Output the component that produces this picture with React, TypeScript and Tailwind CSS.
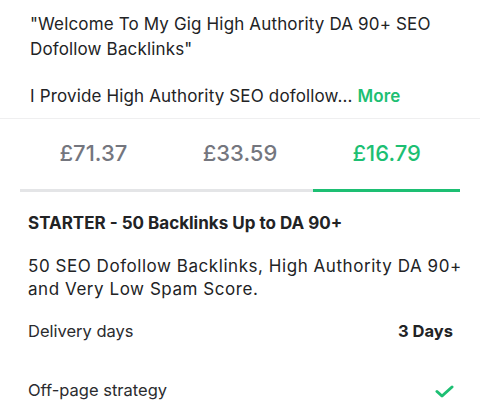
const prices = ["£71.37", "£33.59", "£16.79"];

function Check() {
	return (
		<svg width="19" height="13" viewBox="0 0 19 13" fill="none">
			<path d="M2 6.5 L7 11 L17 2" stroke="#1dbf73" strokeWidth="3" strokeLinecap="round" strokeLinejoin="round" />
		</svg>
	);
}

export default function App() {
	const active = 2;
	return (
		<div className="w-[480px] h-[400px] overflow-hidden bg-white text-[#222325] font-['Inter',sans-serif]">
			<div className="px-[30px] pt-[12px] pb-[9px] text-[17px] leading-[25px] tracking-[0.15px] text-[#222325]">
				<p>"Welcome To My Gig High Authority DA 90+ SEO Dofollow Backlinks"</p>
				<p className="mt-[22px]">
					I Provide High Authority SEO dofollow...{" "}
					<span className="font-semibold text-[#1dbf73]">More</span>
				</p>
			</div>
			<div className="h-px bg-[#efeff0]" />
			<div className="mx-[20px] flex">
				{prices.map((p, i) => (
					<div key={p} className="flex-1 flex flex-col items-center">
						<div className={`pt-[19px] pb-[21px] text-[22px] leading-[30px] font-medium ${i === active ? "text-[#1dbf73]" : "text-[#74767e]"}`}>
							{p}
						</div>
						<div className={`w-full h-[3px] ${i === active ? "bg-[#1dbf73]" : "bg-[#e4e5e7]"}`} />
					</div>
				))}
			</div>
			<div className="px-[28px] pt-[20px]">
				<div className="text-[17px] leading-[22px] font-bold">STARTER - 50 Backlinks Up to DA 90+</div>
				<p className="mt-[21px] mr-[-16px] text-[17px] leading-[23px] tracking-[0.55px] text-[#222325]">
					50 SEO Dofollow Backlinks, High Authority DA 90+ and Very Low Spam Score.
				</p>
				<div className="mt-[19px] flex items-center justify-between text-[16.5px] leading-[22px] text-[#2a2b2e]">
					<span>Delivery days</span>
					<span className="mr-[-1px] font-bold text-[#222325]">3 Days</span>
				</div>
				<div className="mt-[37px] flex items-center justify-between text-[16.5px] leading-[22px] text-[#2a2b2e]">
					<span>Off-page strategy</span>
					<span className="mr-[-2px] mt-[2px]"><Check /></span>
				</div>
			</div>
		</div>
	);
}
